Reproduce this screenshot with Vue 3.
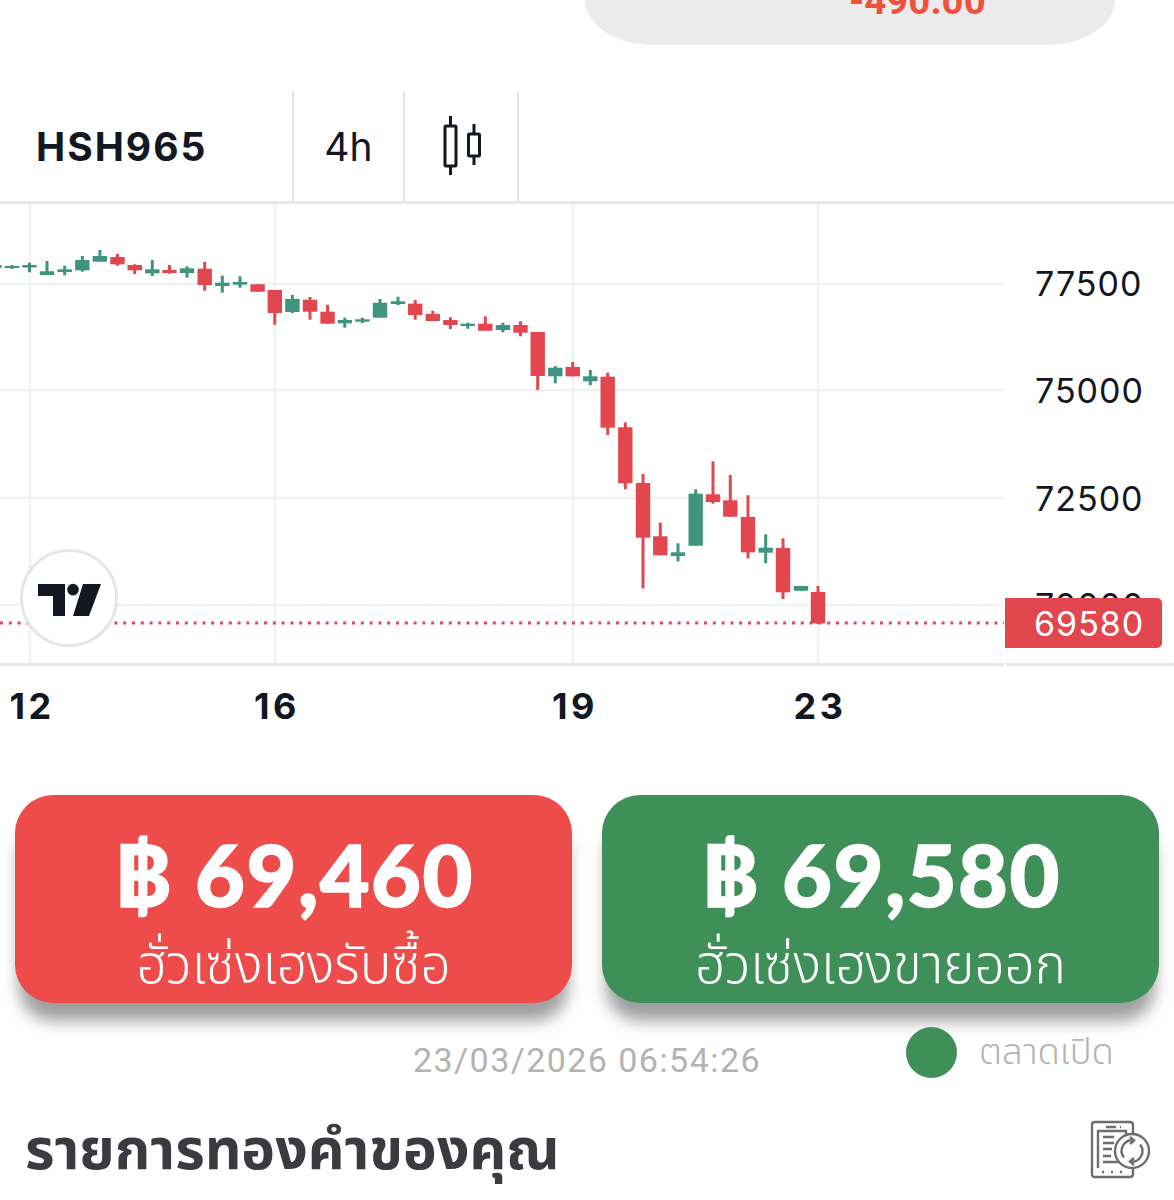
<template>
  <div class="page">
    <div class="balance-pill">
      <span class="balance-pill__value">-490.00</span>
    </div>

    <div class="toolbar">
      <div class="toolbar__cell toolbar__cell--symbol">HSH965</div>
      <div class="toolbar__cell toolbar__cell--interval">4h</div>
      <div class="toolbar__cell toolbar__cell--type">
        <svg width="44" height="60" viewBox="0 0 44 60">
          <path d="M11.5 0V10M11.5 50V59M35 8V18M35 40V49" stroke="#131722" stroke-width="3" />
          <rect x="6" y="10" width="11" height="40" rx="1" fill="none" stroke="#131722" stroke-width="3" />
          <rect x="29.5" y="18" width="11" height="22" rx="1" fill="none" stroke="#131722" stroke-width="3" />
        </svg>
      </div>
    </div>

    <div class="chart">
      <svg class="chart__canvas" width="1174" height="459" viewBox="0 204 1174 459">
        <path
          v-for="y in gridY"
          :key="'h' + y"
          :d="`M0 ${y}H1004`"
          stroke="#f0f1f4"
          stroke-width="2.5"
        />
        <path
          v-for="t in ticks"
          :key="'v' + t.x"
          :d="`M${t.x} 204V663`"
          stroke="#f0f1f4"
          stroke-width="2.5"
        />
        <g v-for="c in candles" :key="c.x" :fill="c.up ? '#3f9480' : '#e2474f'">
          <rect :x="c.x - 1.5" :y="c.wt" width="3" :height="c.wb - c.wt" />
          <rect :x="c.x - 7.2" :y="c.bt" width="14.4" :height="c.bb - c.bt" />
        </g>
        <path
          d="M0 623H1004"
          stroke="#d9485f"
          stroke-width="3"
          stroke-dasharray="3 5.8"
        />
        <text v-for="p in prices" :key="p.label" class="chart__price" x="1035" :y="p.y">{{ p.label }}</text>
      </svg>

      <div class="chart__last">69580</div>

      <div class="chart__logo">
        <svg class="chart__logo-mark" width="64" height="34" viewBox="0 0 64 34">
          <path d="M0 1H27V33H15V13H0ZM45 1H63L51 33H35Z" fill="#131722" />
          <circle cx="35" cy="6.6" r="5.8" fill="#131722" />
        </svg>
      </div>
    </div>

    <div class="time-axis">
      <span
        v-for="t in ticks"
        :key="t.x"
        class="time-axis__tick"
        :style="{ left: t.x + 'px' }"
      >{{ t.label }}</span>
    </div>

    <div class="quotes">
      <div class="quote quote--sell">
        <div class="quote__price">฿ 69,460</div>
        <div class="quote__label">ฮั่วเซ่งเฮงรับซื้อ</div>
      </div>
      <div class="quote quote--buy">
        <div class="quote__price">฿ 69,580</div>
        <div class="quote__label">ฮั่วเซ่งเฮงขายออก</div>
      </div>
    </div>

    <div class="status">
      <span class="status__time">23/03/2026 06:54:26</span>
      <span class="status__dot" />
      <span class="status__market">ตลาดเปิด</span>
    </div>

    <div class="section">
      <h2 class="section__title">รายการทองคำของคุณ</h2>
      <svg class="section__icon" width="60" height="60" viewBox="0 0 60 60" fill="none" stroke="#6e6e6e" stroke-width="2.4">
        <path d="M43 48V54Q43 57 40 57H5Q2 57 2 54V5Q2 2 5 2H40Q43 2 43 5V14" />
        <path d="M8 48V11H36V15" />
        <path d="M16 7H26M30 7H31" />
        <path d="M13 17H24M13 23H24M13 29H22M13 36H21M13 42H33" />
        <path d="M12 52H14M21 52H23M30 52H32" />
        <circle cx="42" cy="31" r="17" fill="#fff" />
        <path d="M44 20.5A10.5 10.5 0 0 0 34 37.5M40 41.5A10.5 10.5 0 0 0 50 24.5" />
        <path d="M40 17L44 20.5L40 24M44 38L40 41.5L44 45" />
      </svg>
    </div>
  </div>
</template>

<script setup>
const gridY = [284, 390, 498, 605]

const ticks = [
  { x: 30, label: '12' },
  { x: 275, label: '16' },
  { x: 573, label: '19' },
  { x: 818, label: '23' },
]

const prices = [
  { label: '77500', y: 296 },
  { label: '75000', y: 403 },
  { label: '72500', y: 511 },
  { label: '70000', y: 618 },
]

// x, wick top, body top, body bottom, wick bottom, up
const raw = [
  [-5.6, 264, 265, 268, 270, 1],
  [12, 265, 266, 268, 269, 1],
  [29.5, 262.7, 265, 267.5, 272.3, 1],
  [47, 261, 271.3, 275, 275, 1],
  [64.7, 265.7, 269.3, 272, 275.3, 1],
  [82.3, 256, 260, 270.3, 271.7, 1],
  [99.9, 250, 256, 261.7, 261.7, 1],
  [117.5, 254, 257, 264.3, 265.7, 0],
  [134.7, 264.3, 265, 270.3, 274, 0],
  [152.3, 260, 269.3, 273.3, 276, 1],
  [169.5, 265, 270, 273, 273.7, 0],
  [187, 266.3, 268.3, 273, 277.7, 1],
  [204.7, 262, 268.7, 285, 290.7, 0],
  [222.3, 275.7, 282.7, 286, 292.7, 1],
  [240, 276.3, 282, 284.7, 287.7, 1],
  [257.6, 284.3, 284.3, 291.7, 291.7, 0],
  [274.8, 290, 290, 313, 324.7, 0],
  [292.4, 295, 299, 312, 313, 1],
  [310, 297, 299.7, 311.7, 319.7, 0],
  [327.6, 304.7, 311.7, 323.7, 323.7, 0],
  [344.8, 317.7, 320, 323.3, 327.7, 1],
  [362.4, 317.7, 319.3, 321.7, 323, 1],
  [380, 299, 302.7, 317.7, 317.7, 1],
  [398, 296.7, 301.3, 304, 305, 1],
  [415.2, 300, 303.7, 315, 319.7, 0],
  [432.8, 310.7, 314, 321, 321, 0],
  [450.4, 317.3, 320, 325, 329, 0],
  [467.7, 322.7, 323.7, 326, 328.7, 1],
  [485.3, 316.3, 323.7, 330.7, 330.7, 0],
  [502.9, 322.7, 325, 330, 332.3, 1],
  [520.5, 321.3, 325, 332.7, 336.3, 0],
  [537.7, 332, 332, 376, 390, 0],
  [555.3, 366, 367.7, 376.3, 383.3, 1],
  [572.7, 362, 367, 376.3, 376.3, 0],
  [590.3, 370, 376.3, 381.3, 385.3, 1],
  [607.7, 372.7, 376.7, 427.7, 435, 0],
  [625.3, 422.3, 427.3, 483.3, 489.3, 0],
  [643, 474, 483, 537.7, 588.3, 0],
  [660.3, 522.7, 536.3, 555.3, 555.3, 0],
  [678, 543.3, 552.3, 556, 561.3, 1],
  [695.7, 489.3, 493.7, 545.7, 545.7, 1],
  [713, 461.3, 494.3, 502, 503.7, 0],
  [730.3, 475, 500.3, 516.7, 516.7, 0],
  [748, 495.3, 517, 552.3, 558.3, 0],
  [765.7, 534.3, 547.7, 552.7, 563.3, 1],
  [783, 538.3, 548, 592.3, 599, 0],
  [801, 586, 586, 590.7, 590.7, 1],
  [818, 586, 592, 623.3, 624, 0],
]

const candles = raw.map(([x, wt, bt, bb, wb, up]) => ({ x, wt, bt, bb, wb, up: !!up }))
</script>

<style scoped>
.page {
  position: relative;
  width: 1174px;
  height: 1200px;
  overflow: hidden;
  background: #fff;
  font-family: "Noto Sans", "Noto Sans Thai", sans-serif;
}

.balance-pill {
  box-sizing: border-box;
  width: 530px;
  height: 45px;
  margin-left: 585px;
  padding-left: 264px;
  overflow: hidden;
  background: #ebebeb;
  border-radius: 0 0 68px 68px / 0 0 45px 45px;
}

.balance-pill__value {
  display: block;
  margin-top: -23px;
  font-family: Roboto, sans-serif;
  font-size: 38.5px;
  line-height: 48px;
  font-weight: 700;
  color: #f0513a;
}

.toolbar {
  display: flex;
  height: 110px;
  margin-top: 46px;
  border-bottom: 3px solid #e6e8ee;
  color: #131722;
}

.toolbar__cell {
  display: flex;
  align-items: center;
  box-sizing: border-box;
  border-right: 2px solid #e0e3eb;
  font-family: Inter, sans-serif;
}

.toolbar__cell--symbol {
  width: 294px;
  padding-left: 36px;
  font-size: 39px;
  font-weight: 700;
  letter-spacing: 2px;
}

.toolbar__cell--interval {
  justify-content: center;
  width: 111px;
  font-size: 39px;
  font-weight: 400;
}

.toolbar__cell--type {
  justify-content: center;
  width: 114px;
}

.chart {
  position: relative;
  height: 459px;
  border-bottom: 3px solid #e6e8ee;
}

.chart::after {
  content: "";
  position: absolute;
  left: 1004px;
  bottom: -3px;
  width: 2px;
  height: 3px;
  background: #fff;
}

.chart__canvas {
  display: block;
}

.chart__price {
  font-family: Inter, sans-serif;
  font-size: 34px;
  letter-spacing: 1px;
  fill: #131722;
}

.chart__last {
  position: absolute;
  left: 1005px;
  top: 394px;
  box-sizing: border-box;
  width: 157px;
  height: 50px;
  padding-top: 1px;
  padding-left: 29px;
  font-family: Inter, sans-serif;
  font-size: 34px;
  line-height: 50px;
  letter-spacing: 1px;
  color: #fff;
  background: #e2474f;
  border-radius: 0 5px 5px 0;
}

.chart__logo {
  position: absolute;
  left: 20px;
  top: 345px;
  display: flex;
  align-items: center;
  justify-content: center;
  box-sizing: border-box;
  width: 98px;
  height: 98px;
  background: #fff;
  border: 3px solid #e6e6e9;
  border-radius: 50%;
}

.chart__logo-mark {
  margin: 4px 0 0 2px;
}

.time-axis {
  position: relative;
  height: 129px;
}

.time-axis__tick {
  position: absolute;
  top: 18px;
  margin-left: 2px;
  transform: translateX(-50%);
  font-family: Inter, sans-serif;
  font-size: 36px;
  line-height: 44px;
  font-weight: 700;
  letter-spacing: 3.5px;
  color: #131722;
}

.quotes {
  display: grid;
  grid-template-columns: 557px 557px;
  gap: 30px;
  padding: 0 15px;
}

.quote {
  height: 208px;
  color: #fff;
  text-align: center;
  border-radius: 38px;
  box-shadow: 0 22px 16px -4px rgba(0, 0, 0, 0.38);
}

.quote--sell {
  background: #ee4c4a;
}

.quote--buy {
  background: #3f8f58;
}

.quote__price {
  padding-top: 26px;
  font-family: Lato, sans-serif;
  font-size: 86px;
  line-height: 106px;
  font-weight: 900;
  letter-spacing: 1.5px;
  -webkit-text-stroke: 1.5px #fff;
}

.quote__label {
  margin-top: 3px;
  font-size: 53px;
  line-height: 66px;
  font-weight: 300;
}

.status {
  position: relative;
  display: flex;
  align-items: center;
  height: 76px;
  padding-left: 413px;
  color: #b3b3b3;
}

.status__time {
  margin-top: 38px;
  font-family: Roboto, sans-serif;
  font-size: 34px;
  letter-spacing: 1.45px;
}

.status__dot {
  width: 51px;
  height: 51px;
  margin-top: 22px;
  margin-left: 145px;
  background: #3f8f58;
  border-radius: 50%;
}

.status__market {
  margin-top: 22px;
  margin-left: 22px;
  font-size: 36.5px;
  font-weight: 300;
}

.section {
  display: flex;
  align-items: flex-start;
  justify-content: space-between;
  padding: 0 24px 0 25px;
  margin-top: 41px;
}

.section__title {
  margin: -3px 0 0;
  font-size: 57px;
  line-height: 60px;
  font-weight: 700;
  color: #3a3a3f;
}
</style>

<style>
html, body {
  margin: 0;
  background: #fff;
}
</style>
